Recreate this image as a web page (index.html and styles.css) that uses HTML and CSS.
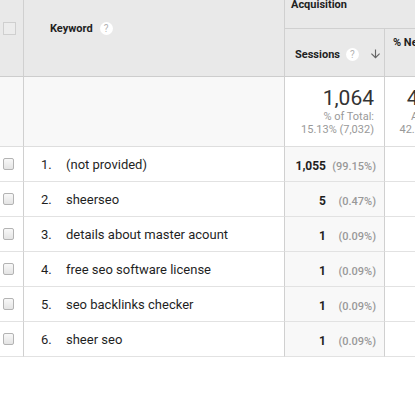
FILE: index.html
```
<!DOCTYPE html>
<html lang="en">
<head>
<meta charset="utf-8">
<title>Keyword report</title>
<link rel="stylesheet" href="styles.css">
</head>
<body>
<table class="report">
  <colgroup>
    <col class="col-check">
    <col class="col-key">
    <col class="col-metric">
    <col class="col-metric">
  </colgroup>
  <thead>
    <tr>
      <th class="h-check" rowspan="2"><span class="box box-head"></span></th>
      <th class="h-key" rowspan="2"><span class="h-inline">Keyword <span class="help">?</span></span></th>
      <th class="h-group" colspan="2"><span class="group-label">Acquisition</span></th>
    </tr>
    <tr>
      <th class="h-metric h-sorted"><span class="h-inline">Sessions <span class="help">?</span><svg class="sort" viewBox="4 4 16 16" width="9" height="10"><path d="M20 12l-1.41-1.41L13 16.17V4h-2v12.170l-5.58-5.59L4 12l8 8 8-8z" fill="#666"/></svg></span></th>
      <th class="h-metric h-new">% New Sessions <span class="help">?</span></th>
    </tr>
  </thead>
  <tbody>
    <tr class="summary">
      <td class="s-check"></td>
      <td class="s-key"></td>
      <td class="s-metric">
        <span class="big">1,064</span>
        <span class="small">% of Total:</span>
        <span class="small">15.13% (7,032)</span>
      </td>
      <td class="s-metric s-last">
        <span class="big">42.45%</span>
        <span class="small">Avg for View:</span>
        <span class="small">42.16% (0.68%)</span>
      </td>
    </tr>
    <tr class="row">
      <td class="c-check"><span class="box"></span></td>
      <td class="c-key"><span class="num">1.</span>(not provided)</td>
      <td class="c-metric"><span class="val">1,055</span><span class="pct">(99.15%)</span></td>
      <td class="c-new">42.09%</td>
    </tr>
    <tr class="row">
      <td class="c-check"><span class="box"></span></td>
      <td class="c-key"><span class="num">2.</span>sheerseo</td>
      <td class="c-metric"><span class="val">5</span><span class="pct">(0.47%)</span></td>
      <td class="c-new">60.00%</td>
    </tr>
    <tr class="row">
      <td class="c-check"><span class="box"></span></td>
      <td class="c-key"><span class="num">3.</span>details about master acount</td>
      <td class="c-metric"><span class="val">1</span><span class="pct">(0.09%)</span></td>
      <td class="c-new">100.00%</td>
    </tr>
    <tr class="row">
      <td class="c-check"><span class="box"></span></td>
      <td class="c-key"><span class="num">4.</span>free seo software license</td>
      <td class="c-metric"><span class="val">1</span><span class="pct">(0.09%)</span></td>
      <td class="c-new">100.00%</td>
    </tr>
    <tr class="row">
      <td class="c-check"><span class="box"></span></td>
      <td class="c-key"><span class="num">5.</span>seo backlinks checker</td>
      <td class="c-metric"><span class="val">1</span><span class="pct">(0.09%)</span></td>
      <td class="c-new">100.00%</td>
    </tr>
    <tr class="row">
      <td class="c-check"><span class="box"></span></td>
      <td class="c-key"><span class="num">6.</span>sheer seo</td>
      <td class="c-metric"><span class="val">1</span><span class="pct">(0.09%)</span></td>
      <td class="c-new">0.00%</td>
    </tr>
  </tbody>
</table>
</body>
</html>
```
FILE: styles.css
```
* { box-sizing: border-box; }
html, body { margin: 0; padding: 0; overflow: hidden; background: #fff; }
body { font-family: Roboto, "Liberation Sans", Arial, sans-serif; color: #222; }

.report { border-collapse: separate; border-spacing: 0; table-layout: fixed; width: 485px; }
.report th, .report td { padding: 0; }
.col-check { width: 24px; }
.col-key { width: 261px; }
.col-metric { width: 100px; }

th { background: #e9e9e9; font-weight: 700; font-size: 11px; line-height: 13px; text-align: left; color: #1f1f1f; white-space: nowrap; }

.h-inline { display: flex; align-items: center; }
.help { display: inline-block; width: 13px; height: 13px; border-radius: 50%; background: #fff; color: #b3b3b3; font-size: 10px; font-weight: 400; line-height: 13px; text-align: center; margin-left: 7px; }

.h-check { border-right: 1px solid #d0d0d0; border-bottom: 1px solid #cdcdcd; vertical-align: top; padding: 22px 0 0 3px !important; }
.box { display: block; width: 11px; height: 12px; border: 1px solid #b3b3b3; border-radius: 2px; background: linear-gradient(#f8f8f8, #e4e4e4); }
.box-head { width: 13px; height: 13px; border-color: #cfcfcf; border-radius: 0; background: #ececec; }

.h-key { border-right: 1px solid #d0d0d0; border-bottom: 1px solid #cdcdcd; vertical-align: top; padding: 22px 0 0 26px !important; }

.h-group { height: 29px; border-bottom: 1px solid #d0d0d0; vertical-align: top; padding-left: 6px !important; }
.group-label { display: block; margin-top: -2px; }

.h-metric { height: 48px; border-bottom: 1px solid #cdcdcd; }
.h-sorted { border-right: 1px solid #d0d0d0; vertical-align: middle; padding: 3px 4px 0 10px !important; }
.h-sorted .help { margin-left: 6px; }
.sort { margin-left: auto; }
.h-new { vertical-align: top; padding: 7px 8px 0 !important; }

.summary td { height: 70px; background: #f8f8f8; border-bottom: 1px solid #dedede; }
.s-check, .s-key { border-right: 1px solid #d0d0d0; }
.summary .s-metric { background: #fff; border-right: 1px solid #d0d0d0; text-align: right; vertical-align: top; padding: 9px 10px 0 0; }
.summary .s-last { border-right: 0; }
.big { display: block; font-size: 21px; line-height: 24px; font-weight: 400; color: #333; }
.small { display: block; font-size: 11px; line-height: 13px; color: #999; }

.row td { height: 35px; border-bottom: 1px solid #e2e2e2; vertical-align: middle; }
.c-check { border-right: 1px solid #d0d0d0; padding-left: 3px !important; }
.c-key { border-right: 1px solid #d0d0d0; padding-left: 17px !important; font-size: 13px; color: #1f1f1f; white-space: nowrap; }
.num { display: inline-block; width: 25px; }
.c-metric { background: #f8f8f8; border-right: 1px solid #d0d0d0; text-align: right; padding-right: 8px !important; white-space: nowrap; }
.val { font-size: 12px; font-weight: 700; color: #1f1f1f; }
.pct { display: inline-block; width: 50px; font-size: 11px; font-weight: 500; color: #999; }
.c-new { text-align: right; padding-right: 10px !important; font-size: 12px; font-weight: 700; }
```
